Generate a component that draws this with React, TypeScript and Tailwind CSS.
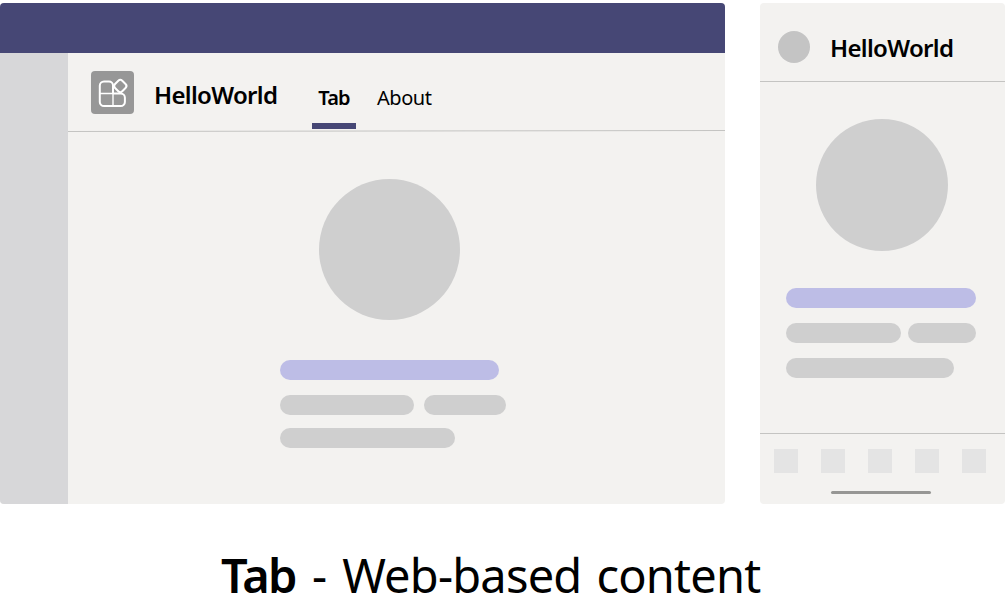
function AppIcon() {
  return (
    <svg className="h-[43px] w-[43px] shrink-0" viewBox="0 0 43 43" fill="none" stroke="#fff">
      <rect width="43" height="43" rx="4" fill="#979797" stroke="none" />
      <path
        d="M22 22.500V14.500a4 4 0 0 0-4-4h-5a4.200 4.200 0 0 0-4.200 4.200v16.200a4.200 4.200 0 0 0 4.200 4.200h16.700a4.200 4.200 0 0 0 4.200-4.200v-4.200a4.200 4.200 0 0 0-4.200-4.200H22"
        strokeWidth="2"
      />
      <path d="M22 22v13M8.800 22.500h13.200" strokeWidth="1.400" />
      <rect x="24.200" y="9.900" width="10.200" height="10.200" rx="2.800" transform="rotate(45 29.300 15)" strokeWidth="2" />
    </svg>
  );
}

function Desktop() {
  return (
    <section className="flex h-[501px] w-[725px] flex-col overflow-hidden rounded-[4px] bg-[#f3f2f0]">
      <div className="h-[50px] shrink-0 bg-[#464775]" />
      <div className="flex grow">
        <aside className="w-[68px] shrink-0 bg-[#d7d7d9]" />
        <main className="flex w-[657px] flex-col">
          <header className="flex h-[76px] items-start pl-[23px]">
            <div className="pt-[18px]">
              <AppIcon />
            </div>
            <h1 className="ml-5 mt-[26px] w-[158px] text-[24px] leading-[32px] font-semibold tracking-[-0.67px]">HelloWorld</h1>
            <nav className="flex text-[20px] leading-[28px]">
              <div className="flex h-[76px] w-[44px] flex-col items-center justify-between pt-[31px]">
                <span className="font-semibold tracking-[-0.8px]">Tab</span>
                <span className="h-[6px] w-full bg-[#464775]" />
              </div>
              <span className="ml-[21px] mt-[31px] tracking-[-0.45px]">About</span>
            </nav>
          </header>
          <svg className="h-[3px] w-[657px] shrink-0" viewBox="0 0 657 3">
            <path d="M0 2.500L657 1.500" stroke="#c4c4c2" strokeWidth="1" />
          </svg>
          <div className="ml-[251px] mt-[47px] h-[141px] w-[141px] rounded-full bg-[#cfcfcf]" />
          <div className="ml-[212px] mt-10 h-5 w-[219px] rounded-full bg-[#bdbde6]" />
          <div className="ml-[212px] mt-[15px] flex gap-2.5">
            <div className="h-5 w-[134px] rounded-full bg-[#cfcfcf]" />
            <div className="h-5 w-[82px] rounded-full bg-[#cfcfcf]" />
          </div>
          <div className="ml-[212px] mt-[13.400px] h-5 w-[175px] rounded-full bg-[#cfcfcf]" />
        </main>
      </div>
    </section>
  );
}

function Mobile() {
  return (
    <section className="flex h-[501px] w-[245px] flex-col overflow-hidden rounded-[4px] bg-[#f3f2f0]">
      <header className="flex h-[79px] shrink-0 items-start border-b border-[#c4c4c2] pl-[18px]">
        <div className="mt-7 h-8 w-8 rounded-full bg-[#c4c4c4]" />
        <h2 className="ml-5 mt-[29px] text-[24px] leading-[32px] font-semibold tracking-[-0.67px]">HelloWorld</h2>
      </header>
      <div className="ml-14 mt-[37px] h-[132px] w-[132px] rounded-full bg-[#cfcfcf]" />
      <div className="ml-[26px] mt-[37px] flex w-[190px] flex-col gap-[15px]">
        <div className="h-5 rounded-full bg-[#bdbde6]" />
        <div className="flex gap-[7px]">
          <div className="h-5 w-[115px] rounded-full bg-[#cfcfcf]" />
          <div className="h-5 w-[68px] rounded-full bg-[#cfcfcf]" />
        </div>
        <div className="h-5 w-[168px] rounded-full bg-[#cfcfcf]" />
      </div>
      <footer className="mt-auto flex h-[71px] flex-col border-t border-[#c4c4c2] pt-[15px]">
        <div className="flex gap-[23px] pl-3.5">
          {[0, 1, 2, 3, 4].map((i) => (
            <span key={i} className="h-6 w-6 bg-[#e4e4e4]" />
          ))}
        </div>
        <div className="ml-[71px] mt-[18px] h-[3px] w-[100px] rounded-full bg-[#969694]" />
      </footer>
    </section>
  );
}

export default function App() {
  return (
    <div className="h-[613px] w-[1006px] overflow-hidden bg-white pt-[3px] font-['Noto_Sans',sans-serif] text-black">
      <div className="flex gap-[35px]">
        <Desktop />
        <Mobile />
      </div>
      <p className="ml-[221px] mt-[38px] flex text-[47px] leading-[66px] whitespace-pre">
        <strong className="w-[91px] font-semibold tracking-[-1.800px]">Tab</strong>
        <span className="mr-[15px]">-</span>
        <span className="tracking-[-0.800px] [word-spacing:3.5px]">Web-based content</span>
      </p>
    </div>
  );
}
